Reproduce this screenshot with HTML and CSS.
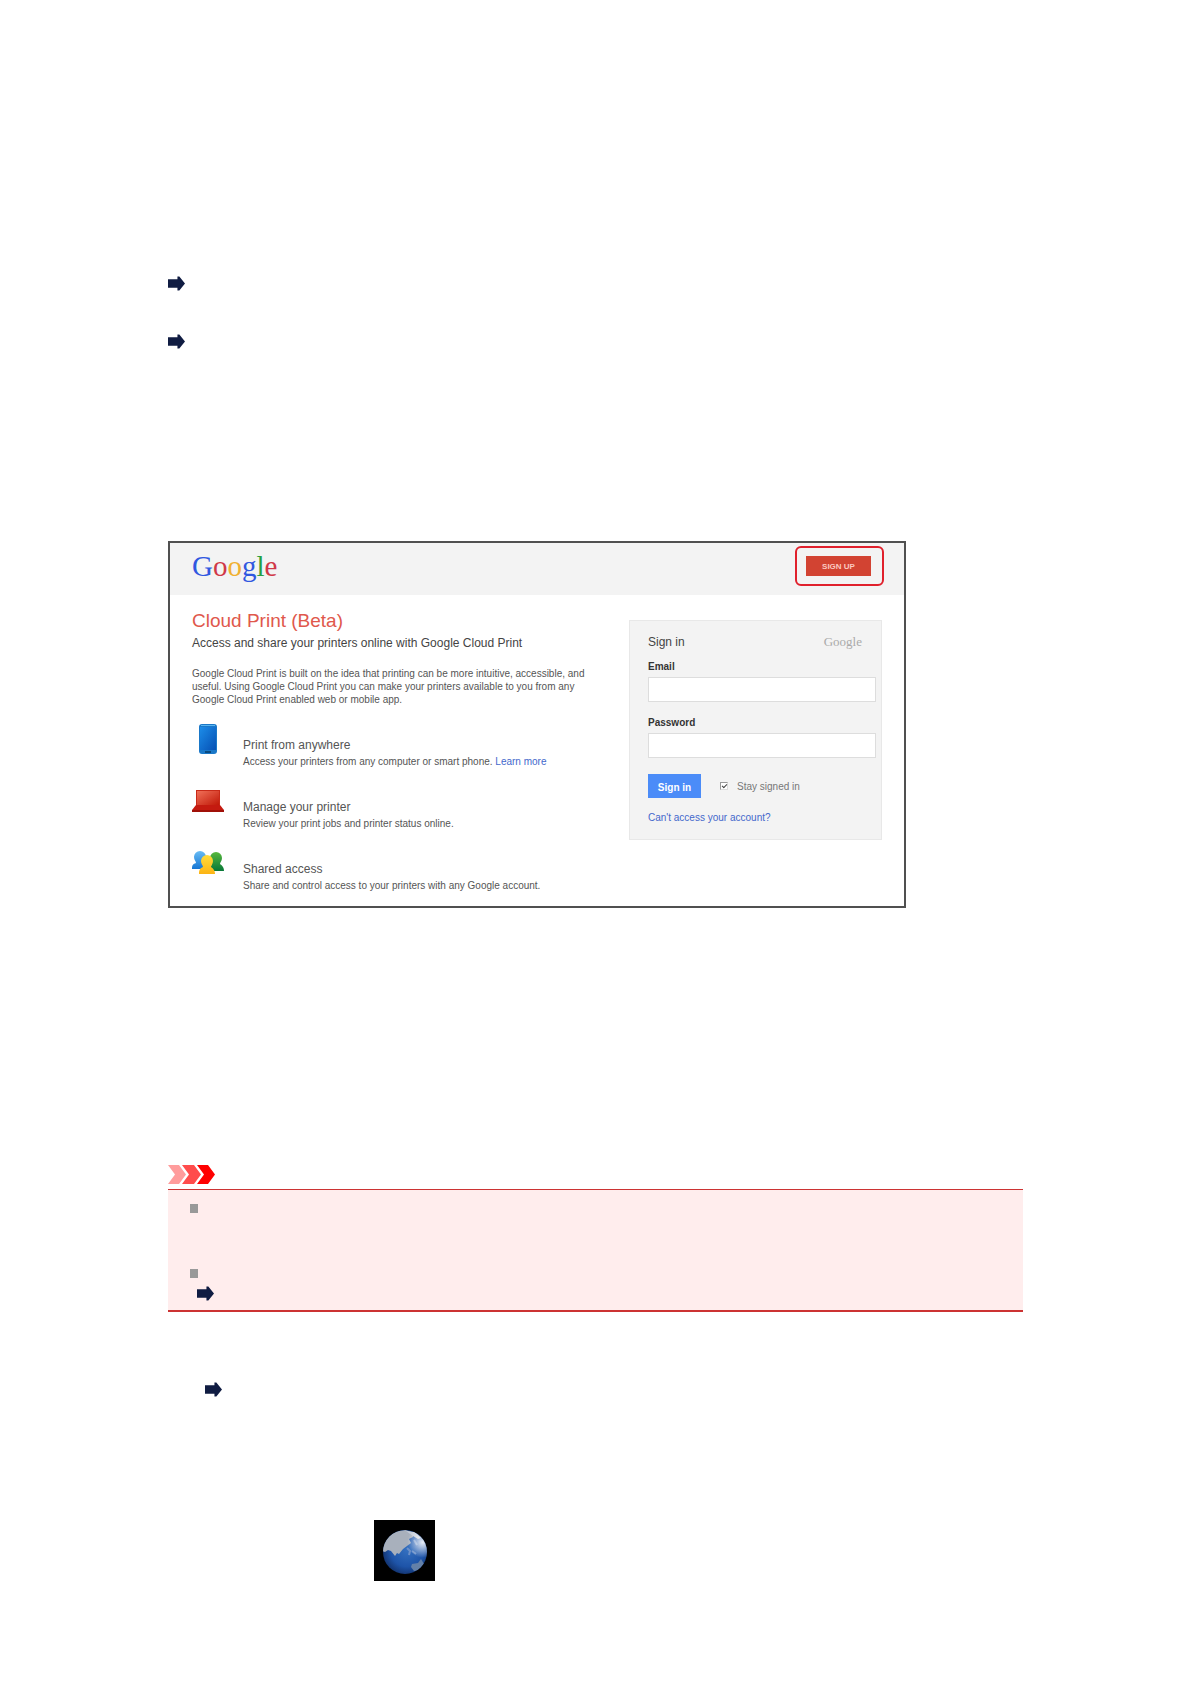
FILE: index.html
```html
<!DOCTYPE html>
<html lang="en">
<head>
    <meta charset="UTF-8">
    <meta name="viewport" content="width=device-width, initial-scale=1.0">
    <title>Google Cloud Print</title>
    <link rel="stylesheet" href="styles.css">
</head>
<body>
    <!-- shared shape -->
    <svg class="defs" width="0" height="0" aria-hidden="true">
        <symbol id="arrow" viewBox="0 0 18 15">
            <path d="M0 3h10V0h2l6 7.500-6 7.500h-2v-3H0z" fill="#101c42"/>
        </symbol>
    </svg>

    <main class="page">
        <div class="links">
            <svg class="arrow"><use href="#arrow"/></svg>
            <svg class="arrow"><use href="#arrow"/></svg>
        </div>

        <section class="window">
            <header class="topbar">
                <div class="logo"><span class="blue">G</span><span class="red">o</span><span class="yellow">o</span><span class="blue">g</span><span class="green">l</span><span class="red">e</span></div>
                <div class="highlight">
                    <button type="button" class="signup">SIGN UP</button>
                </div>
            </header>

            <div class="content">
                <div class="intro">
                    <h1>Cloud Print (Beta)</h1>
                    <h2>Access and share your printers online with Google Cloud Print</h2>
                    <p class="about">Google Cloud Print is built on the idea that printing can be more intuitive, accessible, and<br>useful. Using Google Cloud Print you can make your printers available to you from any<br>Google Cloud Print enabled web or mobile app.</p>

                    <div class="feature">
                        <svg class="icon" viewBox="0 0 32 32">
                            <defs>
                                <linearGradient id="phone" x1="0" y1="0" x2="1" y2="1">
                                    <stop offset="0" stop-color="#1c8ce8"/>
                                    <stop offset="1" stop-color="#0650b4"/>
                                </linearGradient>
                            </defs>
                            <rect x="7" y="1" width="18" height="30" rx="3" fill="#1a78c8"/>
                            <rect x="8" y="4" width="16" height="23" fill="url(#phone)"/>
                            <path d="M9 2.500h14" stroke="#58b4f0"/>
                            <path d="M13 29h6" stroke="#0a4a80" stroke-width="2"/>
                        </svg>
                        <div>
                            <h3>Print from anywhere</h3>
                            <p>Access your printers from any computer or smart phone. <a href="#">Learn more</a></p>
                        </div>
                    </div>

                    <div class="feature">
                        <svg class="icon" viewBox="0 0 32 32">
                            <defs>
                                <linearGradient id="laptop" x1="0" y1="0" x2="1" y2="1">
                                    <stop offset="0" stop-color="#f07058"/>
                                    <stop offset="1" stop-color="#c01808"/>
                                </linearGradient>
                            </defs>
                            <path d="M4 5h24v17H4z" fill="#c82a18"/>
                            <path d="M5 6h22v14H5z" fill="url(#laptop)"/>
                            <path d="M4 20h24l4 5H0z" fill="#c41a10"/>
                            <path d="M0 25h32v2H0z" fill="#a01008"/>
                        </svg>
                        <div>
                            <h3>Manage your printer</h3>
                            <p>Review your print jobs and printer status online.</p>
                        </div>
                    </div>

                    <div class="feature">
                        <svg class="icon" viewBox="0 0 32 32">
                            <defs>
                                <linearGradient id="person-left" x1="0" y1="0" x2="0" y2="1">
                                    <stop offset="0" stop-color="#68bcf4"/>
                                    <stop offset="1" stop-color="#1676d4"/>
                                </linearGradient>
                                <linearGradient id="person-right" x1="0" y1="0" x2="0" y2="1">
                                    <stop offset="0" stop-color="#58b83c"/>
                                    <stop offset="1" stop-color="#087838"/>
                                </linearGradient>
                                <linearGradient id="person-front" x1="0" y1="0" x2="0" y2="1">
                                    <stop offset="0" stop-color="#ffdc3c"/>
                                    <stop offset="1" stop-color="#fcb414"/>
                                </linearGradient>
                            </defs>
                            <path d="M8 4a6 6 0 0 1 6 6c0 3-2 4-2 6l4 6H0c0-4 1-5 4-6 0-2-2-3-2-6a6 6 0 0 1 6-6z" fill="url(#person-left)"/>
                            <path d="M24 5a6 6 0 0 1 6 6c0 3-2 4-2 6 3 2 4 4 4 7H16l4-7c0-2-2-3-2-6a6 6 0 0 1 6-6z" fill="url(#person-right)"/>
                            <path d="M15 8a6 6 0 0 1 6 6c0 3-2 4-2 6 3 2 4 4 4 7H7c0-4 1-6 4-7 0-2-2-3-2-6a6 6 0 0 1 6-6z" fill="url(#person-front)"/>
                        </svg>
                        <div>
                            <h3>Shared access</h3>
                            <p>Share and control access to your printers with any Google account.</p>
                        </div>
                    </div>
                </div>

                <form class="signin">
                    <div class="signin-head">
                        <span>Sign in</span>
                        <span class="logo-small">Google</span>
                    </div>
                    <label for="email">Email</label>
                    <input type="text" id="email">
                    <label for="password">Password</label>
                    <input type="password" id="password">
                    <div class="signin-row">
                        <button type="button" class="submit">Sign in</button>
                        <input type="checkbox" id="stay" checked>
                        <label for="stay">Stay signed in</label>
                    </div>
                    <a href="#">Can't access your account?</a>
                </form>
            </div>
        </section>

        <section class="important">
            <svg class="chevrons" viewBox="0 0 47 19">
                <path d="M0 0h11l7 9.500-7 9.500H0l7-9.500z" fill="#ff9c9c"/>
                <path d="M14 0h12l7 9.500-7 9.500H14l7-9.500z" fill="#ff4c4c"/>
                <path d="M29 0h11l7 9.500-7 9.500H29l7-9.500z" fill="#ff0000"/>
            </svg>
            <div class="notes">
                <div class="bullet"></div>
                <div class="bullet"></div>
                <svg class="arrow"><use href="#arrow"/></svg>
            </div>
        </section>

        <div class="step">
            <svg class="arrow"><use href="#arrow"/></svg>
        </div>

        <svg class="globe" viewBox="0 0 61 61">
            <defs>
                <radialGradient id="sea" cx="0.550" cy="0.450" r="0.550">
                    <stop offset="0" stop-color="#3470c0"/>
                    <stop offset="0.700" stop-color="#1e54a8"/>
                    <stop offset="1" stop-color="#143878"/>
                </radialGradient>
                <radialGradient id="glow" cx="0.900" cy="0.280" r="0.350">
                    <stop offset="0" stop-color="#fff" stop-opacity="0.900"/>
                    <stop offset="1" stop-color="#fff" stop-opacity="0"/>
                </radialGradient>
                <filter id="soft"><feGaussianBlur stdDeviation="0.700"/></filter>
                <clipPath id="disc"><circle cx="31" cy="32" r="22"/></clipPath>
            </defs>
            <rect width="61" height="61" fill="#000"/>
            <circle cx="31" cy="32" r="22" fill="url(#sea)"/>
            <g clip-path="url(#disc)">
                <g filter="url(#soft)">
                    <path d="M8 31c2-12 10-21 24-21l8 3-1 4-4 2 2 4-4 3-4 3-4 5-2-1-2 3-4-5-3-1-3 2z" fill="#a8b0bc"/>
                    <path d="M32 11l9 1 6 6-3 1-5-3z" fill="#c4ccd8"/>
                    <path d="M37 47l1-3 6-1 3-4 3 5-4 6-6 1z" fill="#6480a8"/>
                    <path d="M33 28l3 3-1 4M40 20l3 5M38 31l4 3" stroke="#6c90c8" stroke-width="2" fill="none"/>
                </g>
            </g>
            <circle cx="31" cy="32" r="22" fill="url(#glow)"/>
        </svg>
    </main>
</body>
</html>
```

FILE: styles.css
```css
body {
    font-family: "Liberation Sans", Arial, sans-serif;
    background-color: #fff;
    color: #555;
    margin: 0;
}

h1, h2, h3, p {
    margin: 0;
    font-weight: normal;
}

a {
    color: #4468cc;
    text-decoration: none;
}

.defs {
    position: absolute;
}

.page {
    padding: 276px 168px 102px;
}

.arrow {
    display: block;
    width: 17px;
    height: 15px;
}

.links {
    display: flex;
    flex-direction: column;
    gap: 43px;
    margin-bottom: 192px;
}

/* Cloud Print window */
.window {
    max-width: 734px;
    border: 2px solid #505050;
}

.topbar {
    display: flex;
    justify-content: space-between;
    align-items: flex-start;
    height: 52px;
    padding: 0 20px 0 22px;
    background: #f3f3f3;
}

.logo {
    font-family: "Liberation Serif", "Times New Roman", serif;
    font-size: 29px;
    line-height: 46px;
}

.blue {
    color: #3058e0;
}

.red {
    color: #d03848;
}

.yellow {
    color: #f0b030;
}

.green {
    color: #28a040;
}

.highlight {
    margin-top: 3px;
    padding: 8px 11px 8px 9px;
    border: 2px solid #e0202c;
    border-radius: 6px;
}

.signup {
    display: block;
    width: 65px;
    height: 20px;
    padding: 0;
    border: none;
    background: #d24332;
    color: #fbc8c0;
    font-family: inherit;
    font-size: 8px;
    font-weight: bold;
}

.content {
    display: flex;
    justify-content: space-between;
    align-items: flex-start;
    padding: 14px 22px 8px;
}

.intro h1 {
    color: #e0584c;
    font-size: 19px;
    line-height: 24px;
}

.intro h2 {
    margin-bottom: 14px;
    font-size: 12px;
    line-height: 20px;
    color: #444;
}

.about {
    margin-bottom: 17px;
    font-size: 10px;
    line-height: 13px;
}

.feature {
    display: flex;
    gap: 19px;
    height: 62px;
}

.feature:last-child {
    height: 51px;
}

.icon {
    width: 32px;
    height: 32px;
}

.feature h3 {
    margin-top: 12px;
    font-size: 12px;
    line-height: 20px;
}

.feature p {
    font-size: 10px;
    line-height: 14px;
}

.signin {
    box-sizing: border-box;
    width: 253px;
    height: 220px;
    margin-top: 11px;
    padding: 13px 5px 0 18px;
    border: 1px solid #e8e8e8;
    background: #f3f3f3;
    font-size: 10px;
}

.signin-head {
    display: flex;
    justify-content: space-between;
    margin-bottom: 9px;
    padding-right: 14px;
    font-size: 12px;
    line-height: 16px;
    color: #444;
}

.logo-small {
    font-family: "Liberation Serif", "Times New Roman", serif;
    font-size: 13px;
    color: #aaa;
}

.signin > label {
    display: block;
    margin-bottom: 2px;
    line-height: 16px;
    font-weight: bold;
    color: #333;
}

.signin > input {
    display: block;
    box-sizing: border-box;
    width: 100%;
    height: 25px;
    margin-bottom: 13px;
    border: 1px solid #ddd;
    background: #fff;
}

.signin-row {
    display: flex;
    align-items: center;
    margin: 16px 0 12px;
    color: #777;
}

.submit {
    width: 53px;
    height: 24px;
    padding: 2px 0 0;
    border: none;
    background: #4b8cf8;
    color: #fff;
    font-family: inherit;
    font-size: 10px;
    font-weight: bold;
}

.signin-row input {
    appearance: none;
    width: 8px;
    height: 8px;
    margin: 0 9px 0 19px;
    border: 1px solid #999;
    border-right-color: #ddd;
    border-bottom-color: #ddd;
    background: #fff;
}

.signin-row input:checked::before {
    content: "";
    display: block;
    width: 4px;
    height: 2px;
    margin: 1px;
    border-left: 1px solid #444;
    border-bottom: 1px solid #444;
    transform: rotate(-45deg);
}

.signin > a {
    line-height: 16px;
}

/* Important box */
.important {
    margin-top: 257px;
}

.chevrons {
    display: block;
    width: 47px;
    height: 19px;
}

.notes {
    margin-top: 5px;
    padding: 14px 22px 9px;
    border-top: 1px solid #cc3333;
    border-bottom: 2px solid #cc3333;
    background: #ffeded;
}

.bullet {
    width: 8px;
    height: 9px;
    margin-bottom: 56px;
    background: #999;
}

.bullet + .bullet {
    margin-bottom: 8px;
}

.notes .arrow {
    margin-left: 7px;
}

.step {
    margin: 70px 0 123px 37px;
}

.globe {
    display: block;
    width: 61px;
    height: 61px;
    margin-left: 206px;
}
```
